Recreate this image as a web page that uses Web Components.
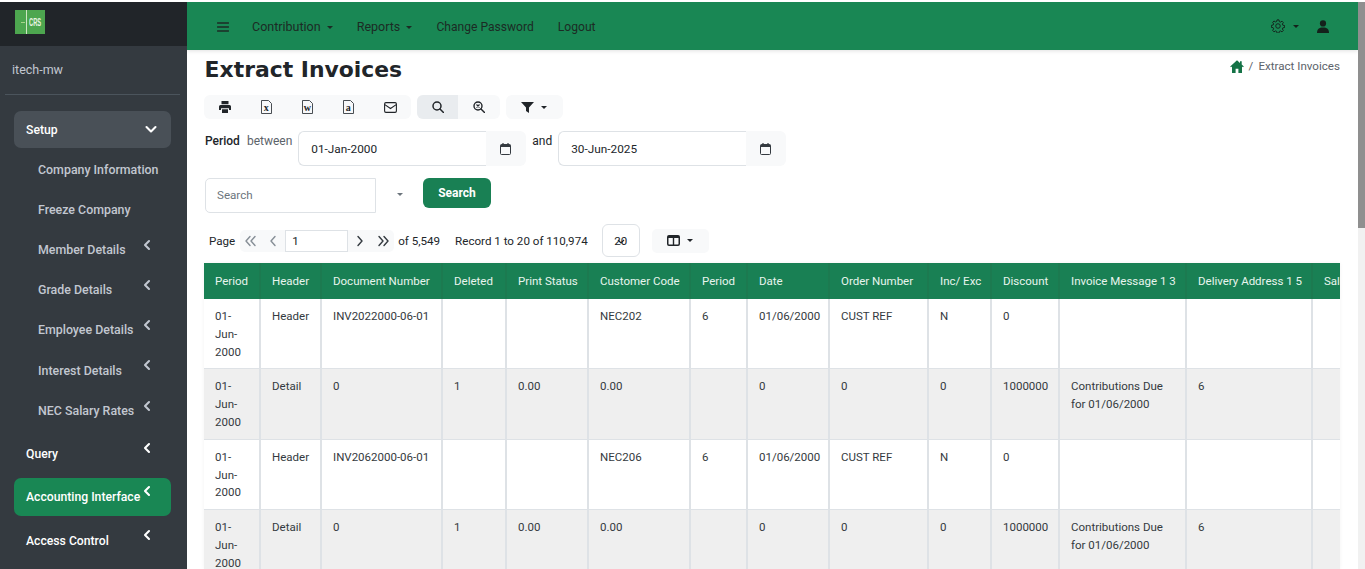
<!DOCTYPE html>
<html><head><meta charset="utf-8"><title>Extract Invoices</title>
<style>
html,body{margin:0;height:569px;overflow:hidden;background:#fff}
body{font:12px/18px Roboto,"Open Sans",sans-serif;color:#212529}
</style></head><body>
<app-shell>
  <side-nav slot="side"></side-nav>
  <top-bar slot="top"></top-bar>
  <page-head slot="main"></page-head>
  <report-tools slot="main"></report-tools>
  <period-filter slot="main"></period-filter>
  <search-bar slot="main"></search-bar>
  <pager-bar slot="main"></pager-bar>
  <invoice-table slot="main"></invoice-table>
</app-shell>
<script>
const ic={
 down:'<svg width="12" height="12" viewBox="0 0 12 12"><path d="M1.5 4l4.5 4.5L10.5 4" fill="none" stroke="currentColor" stroke-width="2.1" stroke-linecap="round" stroke-linejoin="round"/></svg>',
 left:'<svg width="12" height="12" viewBox="0 0 12 12"><path d="M8 2L4 6l4 4" fill="none" stroke="currentColor" stroke-width="2.1" stroke-linecap="round" stroke-linejoin="round"/></svg>',
 burger:'<svg width="12" height="12" viewBox="0 0 12 12"><path d="M.5 2h11M.5 6h11M.5 10h11" stroke="currentColor" stroke-width="1.4" stroke-linecap="round"/></svg>',
 gear:'<svg width="14" height="14" viewBox="0 0 16 16" fill="none" stroke="currentColor" stroke-width="1.1"><circle cx="8" cy="8" r="2.6"/><path d="M6.9 1h2.2l.4 2 1.3.6 1.8-1.1 1.5 1.5-1.1 1.8.6 1.3 2 .4v2.2l-2 .4-.6 1.3 1.1 1.8-1.5 1.5-1.8-1.1-1.3.6-.4 2H6.9l-.4-2-1.3-.6-1.8 1.1L1.9 13l1.1-1.8-.6-1.3-2-.4V7.3l2-.4.6-1.3L1.9 3.8l1.5-1.5 1.8 1.1 1.3-.6z"/></svg>',
 user:'<svg width="12" height="13" viewBox="0 0 12 13" fill="currentColor"><circle cx="6" cy="3.4" r="3.1"/><path d="M0 13c0-3.6 2-5.4 6-5.4s6 1.8 6 5.4z"/></svg>',
 home:'<svg width="14" height="13" viewBox="0 0 14 13" fill="currentColor"><path d="M7 .3L.2 6.4l.8.9L2 6.4V13h3.6V8.8h2.8V13H12V6.4l1 .9.8-.9-2.1-1.9V1.2H10v1.8z"/></svg>',
 print:'<svg width="12" height="12" viewBox="0 0 12 12" fill="currentColor"><path d="M2.5 0h7v3.2h-7z"/><path d="M1.5 4h9A1.5 1.5 0 0 1 12 5.5V9H10V7.3H2V9H0V5.5A1.5 1.5 0 0 1 1.5 4z"/><path d="M3 8.3h6V12H3z"/></svg>',
 mail:'<svg width="13" height="11" viewBox="0 0 13 11" fill="none" stroke="currentColor" stroke-width="1.1"><rect x=".6" y=".6" width="11.8" height="9.8" rx="1.3"/><path d="M.8 2.6l5.7 3.9 5.7-3.9"/></svg>',
 search:'<svg width="12" height="12" viewBox="0 0 12 12" fill="none" stroke="currentColor" stroke-width="1.5"><circle cx="5" cy="5" r="4"/><path d="M8 8l3.5 3.5" stroke-linecap="round"/></svg>',
 zoomx:'<svg width="12" height="12" viewBox="0 0 12 12" fill="none" stroke="currentColor" stroke-width="1.4"><circle cx="5" cy="5" r="4"/><path d="M8 8l3.5 3.5" stroke-linecap="round"/><path d="M3.5 3.5l3 3M6.5 3.5l-3 3" stroke-width="1.1"/></svg>',
 filter:'<svg width="13" height="11" viewBox="0 0 13 11" fill="currentColor"><path d="M0 0h13L8 5.6V11L5 9V5.6z"/></svg>',
 cal:'<svg width="11" height="12" viewBox="0 0 11 12"><path d="M1.5 1.5h8A1 1 0 0 1 10.5 2.5v8a1 1 0 0 1-1 1h-8a1 1 0 0 1-1-1v-8a1 1 0 0 1 1-1z" fill="none" stroke="currentColor"/><path d="M.5 2.5a1 1 0 0 1 1-1h8a1 1 0 0 1 1 1V4H.5z" fill="currentColor"/><path d="M3 0v2M8 0v2" stroke="currentColor" stroke-width="1.2"/></svg>',
 columns:'<svg width="13" height="11" viewBox="0 0 13 11"><rect x=".75" y=".75" width="11.5" height="9.5" rx="1.2" fill="none" stroke="currentColor" stroke-width="1.5"/><path d="M6.5 1v9" stroke="currentColor" stroke-width="1.4"/><path d="M1 1h11v2H1z" fill="currentColor"/></svg>'
};
const doc=l=>`<svg width="11" height="14" viewBox="0 0 11 14"><path d="M.5.5h7l3 3v10H.5z" fill="none" stroke="#343a40" stroke-width=".9"/><text x="5.3" y="11" text-anchor="middle" font-family="Liberation Serif" font-weight="700" font-size="10" fill="#212529">${l}</text></svg>`;
const caret='<i style="display:inline-block;border:3.5px solid transparent;border-top-color:currentColor;border-bottom:0;vertical-align:middle"></i>';
function def(name,html){customElements.define(name,class extends HTMLElement{
  constructor(){super();this.attachShadow({mode:'open'}).innerHTML=typeof html==='function'?html(this):html;}
});}

def('app-shell',`<style>
:host{display:grid;grid-template-columns:187px 1fr 7px;height:567px;margin-top:2px;overflow:hidden}
.col{min-width:0;display:flex;flex-direction:column;overflow:hidden}
.main{flex:1;padding:0 18px 0 17px;display:flex;flex-direction:column;min-height:0}
.bar{background:#f1f1f1;display:flex}
.bar i{display:block;width:100%;height:226px;background:#8f8f8f}
</style>
<slot name="side"></slot>
<div class="col"><slot name="top"></slot><div class="main"><slot name="main"></slot></div></div>
<div class="bar"><i></i></div>`);

def('nav-item',h=>{
  const top=h.hasAttribute('top'),chev=h.getAttribute('chev')||'left';
  return `<style>
  :host{display:block}
  a{display:flex;align-items:center;position:relative;box-sizing:border-box;font-weight:500;font-size:${top?'12.2px':'12.4px'};line-height:18px;color:${top?'#fff':'#c2c7d0'};height:${top?'38px':'40.2px'};padding-left:${top?'12px':'24px'};border-radius:7px;white-space:nowrap}
  :host([open]) a{background:#495057;height:37px}
  :host([active]) a{background:#198754}
  svg{position:absolute;left:${chev==='down'?'131px':'127px'};top:${chev==='down'?'12px':(top?'7px':'9px')}}
  :host([nochev]) svg{display:none}
  </style><a><slot></slot>${ic[chev]}</a>`;
});

def('side-nav',`<style>
:host{display:block;background:#343a40;height:567px;overflow:hidden}
.brand{height:44px;background:#212529;display:flex;align-items:center;padding-left:15px;box-sizing:border-box}
.logo{width:30px;height:24px;background:#4da64f;display:flex;align-items:center;margin-top:-4px}
.logo u{display:block;width:4px;height:1px;background:#a7d58a;margin-left:6px}
.logo b{margin-left:1px;padding-left:2px;border-left:1px solid #cfe6c4;height:24px;display:flex;align-items:center}
.logo s{display:block;text-decoration:none;font:700 10.5px/10px "Liberation Sans",sans-serif;color:#e8f3e0;transform:scaleX(.55);transform-origin:left center;width:12px}
.user{margin:0 7px 0 5px;padding:14px 7px 0;height:49px;box-sizing:border-box;border-bottom:1px solid #4b545c;color:#c2c7d0;font-size:12.5px;line-height:20px}
nav{padding:16px 16px 0 14px;display:flex;flex-direction:column}
.sub{display:flex;flex-direction:column;margin-top:1.5px;margin-bottom:4px}
.gap{height:5px}
.gap2{height:6.5px}
</style>
<div class="brand"><div class="logo"><u></u><b><s>CRS</s></b></div></div>
<div class="user">itech-mw</div>
<nav>
<nav-item top open chev="down">Setup</nav-item>
<div class="sub">
<nav-item nochev>Company Information</nav-item>
<nav-item nochev>Freeze Company</nav-item>
<nav-item>Member Details</nav-item>
<nav-item>Grade Details</nav-item>
<nav-item>Employee Details</nav-item>
<nav-item>Interest Details</nav-item>
<nav-item>NEC Salary Rates</nav-item>
</div>
<nav-item top>Query</nav-item><div class="gap"></div>
<nav-item top active>Accounting Interface</nav-item><div class="gap2"></div>
<nav-item top>Access Control</nav-item>
</nav>`);

def('top-bar',`<style>
:host{display:flex;align-items:center;height:48px;background:#198754;color:#1c2b24;font-size:12.1px;padding:2px 29px 0 30px;box-sizing:border-box;box-shadow:0 1px 4px rgba(0,0,0,.12);position:relative;flex:none}
span{margin-left:24px;white-space:nowrap}
span.d{font-size:12.5px}
span i{margin-left:3px}
.b{display:flex;margin-top:-1px;margin-right:-1px}
.r{margin-left:auto;display:flex;align-items:center;color:#14211b;margin-top:-2px}
.r i{margin:0 0 0 8px}
.u{margin-left:18px;display:flex}
</style>
<div class="b">${ic.burger}</div>
<span class="d">Contribution ${caret}</span><span class="d">Reports ${caret}</span><span>Change Password</span><span>Logout</span>
<div class="r">${ic.gear}${caret}<div class="u">${ic.user}</div></div>`);

def('page-head',`<style>
:host{display:flex;justify-content:space-between;height:45px;flex:none}
h1{margin:7px 0 0 .6px;font:700 21.9px/26px "DejaVu Sans",Verdana,sans-serif;color:#212529}
.c{display:flex;align-items:center;gap:5px;height:14px;margin-top:9px;color:#5c636a;font-size:11.6px}
svg{color:#157347}
</style><h1>Extract Invoices</h1><div class="c">${ic.home}<span>/</span><span>Extract Invoices</span></div>`);

def('report-tools',`<style>
:host{display:flex;gap:6px;height:24px;flex:none;margin-bottom:12px;color:#212529}
.g{display:flex;background:#f8f9fa;border-radius:6px;overflow:hidden}
.g div{display:flex;align-items:center;justify-content:center;width:41.4px}
.g div.on{background:#e9ecef}
.f{gap:7px}
</style>
<div class="g"><div>${ic.print}</div><div>${doc('x')}</div><div>${doc('w')}</div><div>${doc('a')}</div><div>${ic.mail}</div></div>
<div class="g"><div class="on">${ic.search}</div><div>${ic.zoomx}</div></div>
<div class="g"><div class="f" style="width:57px">${ic.filter}${caret}</div></div>`);

def('date-field',h=>`<style>
:host{display:flex;height:35px;width:228px;flex:none}
.i{flex:1;border:1px solid #dee2e6;border-right:0;border-radius:6px 0 0 6px;padding:0 12px;display:flex;align-items:center;color:#212529;font-size:11.8px}
.a{width:38px;padding-right:2px;background:#f8f9fa;border-radius:0 6px 6px 0;display:flex;align-items:center;justify-content:center;color:#343a40}
</style><div class="i"><slot></slot></div><div class="a">${ic.cal}</div>`);

def('period-filter',`<style>
:host{display:flex;height:35px;flex:none;margin-bottom:12px}
.l{padding:1px 0 0 1px;line-height:18px}
b{font-weight:500}
.m{color:#5c636a;margin-left:6px;margin-right:6px}
.and{margin:1px 6px 0 6px}
</style><div class="l"><b>Period</b></div><div class="l m">between</div><date-field>01-Jan-2000</date-field><div class="and">and</div><date-field>30-Jun-2025</date-field>`);

def('search-bar',`<style>
:host{display:flex;flex:none;height:35px;margin:0 0 11px 0;align-items:flex-start;padding-left:1px}
.i{width:171px;height:35px;box-sizing:border-box;border:1px solid #dee2e6;border-radius:5px 0 0 5px;display:flex;align-items:center;padding-left:11px;padding-bottom:1px;color:#6c757d;font-size:11.6px}
.c{width:47px;text-align:center;color:#6c757d;height:35px;line-height:33px}
button{font:700 12px/18px Roboto,"Open Sans",sans-serif;color:#fff;background:#198054;border:0;border-radius:6px;width:68px;height:30px;padding:0}
</style><div class="i">Search</div><div class="c">${caret}</div><button>Search</button>`);

const chev=(d,dbl,c)=>{const s=x=>d<0?`M${x+4} 1.5L${x} 6l4 4.5`:`M${x} 1.5L${x+4} 6l-4 4.5`;
 return `<svg width="${dbl?11:7}" height="12" viewBox="0 0 ${dbl?11:7} 12" fill="none" stroke="${c}" stroke-width="1.4" stroke-linecap="round" stroke-linejoin="round"><path d="${s(1)}"/>${dbl?`<path d="${s(6)}"/>`:''}</svg>`};

def('pager-bar',`<style>
:host{display:flex;align-items:center;height:33px;flex:none;margin-bottom:6px;padding-left:5px;color:#212529;font-size:11.6px}
.g{display:flex;align-items:center;height:22px;margin-left:5px;background:#f8f9fa;border-radius:5px}
.p{display:flex;width:21px;justify-content:center}
.inp{width:63px;height:22px;box-sizing:border-box;border:1px solid #dee2e6;background:#fff;padding-left:6px;line-height:20px}
.of{margin-left:4px}.rec{margin-left:15px}
.sel{width:38px;height:33px;box-sizing:border-box;border:1px solid #dee2e6;border-radius:6px;margin-left:14px;display:flex;align-items:center;justify-content:center;position:relative;font-size:11.5px}
.sel svg{position:absolute;left:14px;top:12px}
.col{margin-left:12px;width:57px;height:24px;background:#f8f9fa;border-radius:5px;display:flex;align-items:center;justify-content:center;gap:7px}
</style>Page
<div class="g"><div class="p">${chev(-1,1,'#868e96')}</div><div class="p" style="width:24px">${chev(-1,0,'#868e96')}</div><div class="inp">1</div><div class="p" style="width:24px">${chev(1,0,'#343a40')}</div><div class="p" style="width:22px">${chev(1,1,'#343a40')}</div></div>
<div class="of">of 5,549</div><div class="rec">Record 1 to 20 of 110,974</div>
<div class="sel">20<svg width="8" height="8" viewBox="0 0 8 8"><path d="M1 3l3 3 3-3" fill="none" stroke="#212529" stroke-width="1.2"/></svg></div>
<div class="col">${ic.columns}${caret}</div>`);

const widths=[56,61,121,64,82,102,57,82,99,63,68,127,126,60];
const head=['Period','Header','Document Number','Deleted','Print Status','Customer Code','Period','Date','Order Number','Inc/ Exc','Discount','Invoice Message 1 3','Delivery Address 1 5','Sales'];
const H=(n,c)=>['01-Jun-2000','Header',n,'','',c,'6','01/06/2000','CUST REF','N','0','','',''];
const D=['01-Jun-2000','Detail','0','1','0.00','0.00','','0','0','0','1000000','Contributions Due for 01/06/2000','6',''];
const rows=[H('INV2022000-06-01','NEC202'),D,H('INV2062000-06-01','NEC206'),D];
def('invoice-table',`<style>
:host{display:block;flex:none;width:1136px;overflow:hidden;height:306px;box-shadow:0 0 4px rgba(0,0,0,.05);font-size:11.5px}
table{border-collapse:collapse;table-layout:fixed;width:1168px}
th{background:#198054;color:#e8f5ee;font-weight:400;text-align:left;padding:9px 11px;height:18px;white-space:nowrap;border-right:2px solid #1c7a50;overflow:hidden}
td{padding:9px 11px 7px;line-height:17.8px;vertical-align:top;border-right:2px solid #dee2e6;border-bottom:1px solid #dee2e6;color:#343a40;height:53px;overflow:hidden}
tr:nth-child(even) td{background:#efefef}
</style><table><colgroup>${widths.map(w=>`<col style="width:${w}px">`).join('')}</colgroup>
<thead><tr>${head.map(h=>`<th>${h}</th>`).join('')}</tr></thead>
<tbody>${rows.map(r=>`<tr>${r.map(c=>`<td>${c}</td>`).join('')}</tr>`).join('')}</tbody></table>`);
</script>
</body></html>
